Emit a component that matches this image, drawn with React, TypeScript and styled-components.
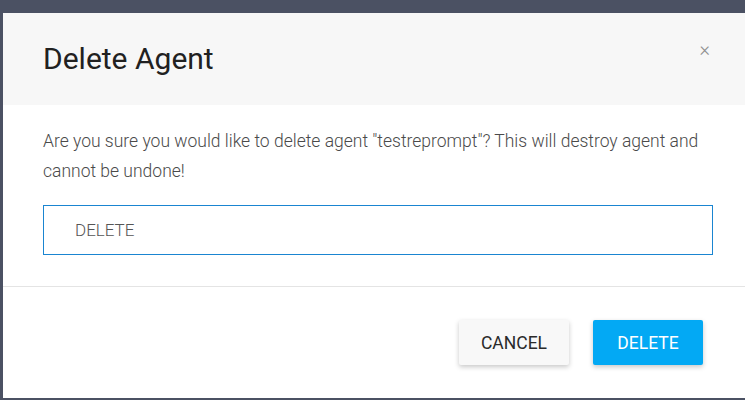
import styled, { createGlobalStyle } from 'styled-components';
import { useState } from 'react';

const GlobalStyle = createGlobalStyle`
  html, body {
    margin: 0;
    padding: 0;
    background: #4b5163;
    font-family: Roboto, "Noto Sans", sans-serif;
    overflow: hidden;
  }
`;

const Backdrop = styled.div`
  width: 745px;
  height: 400px;
  background: #4b5163;
  padding: 13px 0 0 3px;
  box-sizing: border-box;
  overflow: hidden;
`;

const Modal = styled.div`
  width: 760px;
  height: 385px;
  background: #ffffff;
  display: flex;
  flex-direction: column;
`;

const Header = styled.div`
  height: 92px;
  background: #f7f7f7;
  display: flex;
  align-items: center;
  justify-content: space-between;
  padding: 0 0 0 40px;
  box-sizing: border-box;
`;

const Title = styled.h2`
  margin: 0;
  font-size: 30px;
  font-weight: 400;
  color: #212121;
  padding-bottom: 2px;
`;

const Close = styled.button`
  border: none;
  background: none;
  color: #8f8f8f;
  font-size: 20px;
  font-weight: 300;
  font-family: Roboto, sans-serif;
  margin-right: 53px;
  margin-bottom: 21px;
  padding: 0;
  cursor: pointer;
`;

const Body = styled.div`
  padding: 21px 0 31px 40px;
  box-sizing: border-box;
  border-bottom: 1px solid #e4e4e4;
`;

const Message = styled.p`
  margin: 0 0 19px;
  font-size: 17.5px;
  font-weight: 300;
  line-height: 30px;
  color: #4a4a4a;
  width: 670px;
`;

const Input = styled.input`
  display: block;
  width: 670px;
  height: 50px;
  box-sizing: border-box;
  border: 1px solid #1a85d1;
  outline: none;
  padding: 0 31px;
  font-family: Roboto, sans-serif;
  font-size: 17px;
  font-weight: 300;
  color: #555;
  caret-color: #222;
`;

const Footer = styled.div`
  display: flex;
  gap: 24px;
  padding: 33px 0 0 456px;
`;

const Button = styled.button<{ primary?: boolean }>`
  width: 110px;
  height: 45px;
  border: none;
  border-radius: 2px;
  font-family: Roboto, sans-serif;
  font-size: 17.5px;
  font-weight: 400;
  cursor: pointer;
  background: ${(p) => (p.primary ? '#03a9f4' : '#f8f8f8')};
  color: ${(p) => (p.primary ? '#ffffff' : '#2a2a2a')};
  box-shadow: 0 2px 5px rgba(0, 0, 0, 0.22);
`;

export default function App() {
  const [value, setValue] = useState('DELETE');

  return (
    <>
      <GlobalStyle />
      <Backdrop>
        <Modal>
          <Header>
            <Title>Delete Agent</Title>
            <Close aria-label="close">×</Close>
          </Header>
          <Body>
            <Message>
              Are you sure you would like to delete agent "testreprompt"? This
              will destroy agent and cannot be undone!
            </Message>
            <Input
              autoFocus
              value={value}
              onChange={(e) => setValue(e.target.value)}
            />
          </Body>
          <Footer>
            <Button>CANCEL</Button>
            <Button primary>DELETE</Button>
          </Footer>
        </Modal>
      </Backdrop>
    </>
  );
}
